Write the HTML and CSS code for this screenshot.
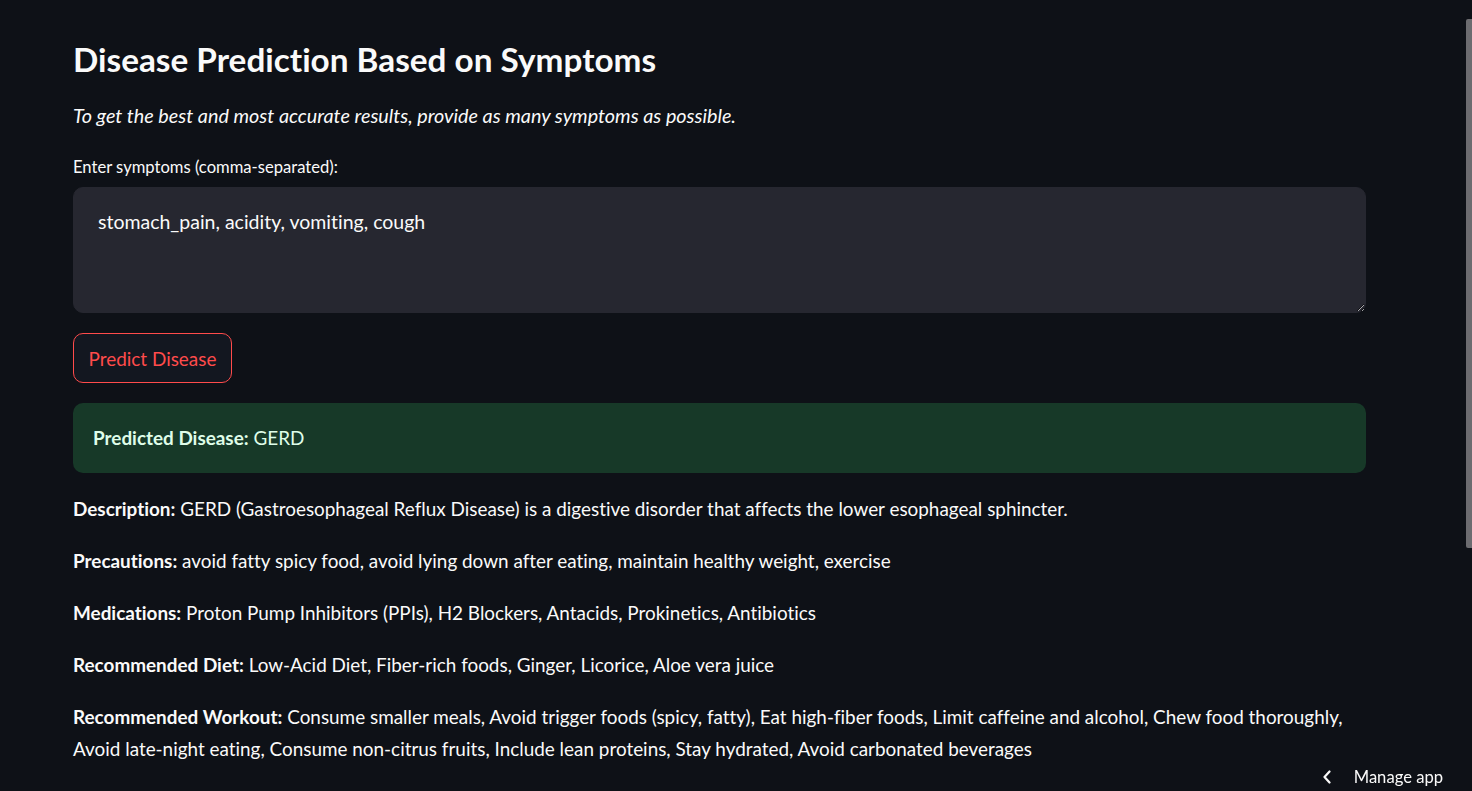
FILE: index.html
```html
<!DOCTYPE html>
<html lang="en">
<head>
<meta charset="utf-8">
<title>Disease Prediction</title>
<link rel="stylesheet" href="styles.css">
</head>
<body>
<main class="main">
  <h1 class="title">Disease Prediction Based on Symptoms</h1>
  <p class="intro"><em>To get the best and most accurate results, provide as many symptoms as possible.</em></p>
  <label class="field-label" for="symptoms">Enter symptoms (comma-separated):</label>
  <textarea class="field" id="symptoms">stomach_pain, acidity, vomiting, cough</textarea>
  <div class="btn-row"><button class="btn">Predict Disease</button></div>
  <div class="alert-success"><strong>Predicted Disease:</strong> GERD</div>
  <div class="results">
    <p><strong>Description:</strong> GERD (Gastroesophageal Reflux Disease) is a digestive disorder that affects the lower esophageal sphincter.</p>
    <p><strong>Precautions:</strong> avoid fatty spicy food, avoid lying down after eating, maintain healthy weight, exercise</p>
    <p><strong>Medications:</strong> Proton Pump Inhibitors (PPIs), H2 Blockers, Antacids, Prokinetics, Antibiotics</p>
    <p><strong>Recommended Diet:</strong> Low-Acid Diet, Fiber-rich foods, Ginger, Licorice, Aloe vera juice</p>
    <p><strong>Recommended Workout:</strong> Consume smaller meals, Avoid trigger foods (spicy, fatty), Eat high-fiber foods, Limit caffeine and alcohol, Chew food thoroughly, Avoid late-night eating, Consume non-citrus fruits, Include lean proteins, Stay hydrated, Avoid carbonated beverages</p>
  </div>
</main>
<div class="scroll-thumb"></div>
<div class="manage">
  <svg class="chev" width="10" height="14" viewBox="0 0 10 14"><path d="M7.5 1.5 L2.5 7 L7.5 12.5" fill="none" stroke="#fafafa" stroke-width="2.2" stroke-linecap="round" stroke-linejoin="round"/></svg>
  <span>Manage app</span>
</div>
</body>
</html>
```
FILE: styles.css
```css
html,body{margin:0;padding:0;}
body{
  background:#0e1117;
  color:#fafafa;
  font-family:Lato,"Noto Sans",sans-serif;
  font-variant-ligatures:none;
  font-size:18.9px;
  overflow:hidden;
}
.main{
  width:1293px;
  margin-left:73px;
  padding-top:39px;
  display:flex;
  flex-direction:column;
}
.title{
  margin:0;
  font-size:33.3px;
  line-height:40px;
  font-weight:700;
}
.intro{
  margin:20px 0 0;
  font-size:19.8px;
  line-height:32px;
}
.field-label{
  margin-top:26px;
  font-size:16.6px;
  line-height:20px;
}
.field{
  margin-top:10px;
  box-sizing:border-box;
  width:100%;
  height:126px;
  background:#262730;
  color:#fafafa;
  border:1px solid #262730;
  border-radius:10px;
  padding:18px 24px;
  font-family:Lato,"Noto Sans",sans-serif;
  font-variant-ligatures:none;
  font-size:19.5px;
  line-height:32px;
  resize:vertical;
  outline:none;
}
.btn-row{margin-top:20px;display:flex;}
.btn{
  box-sizing:border-box;
  height:50px;
  width:159px;
  white-space:nowrap;
  background:#131720;
  color:#ff4b4b;
  border:1px solid #ff4b4b;
  border-radius:10px;
  font-family:Lato,"Noto Sans",sans-serif;
  font-variant-ligatures:none;
  font-size:18.9px;
  padding:0;
}
.alert-success{
  margin-top:20px;
  box-sizing:border-box;
  height:70px;
  background:#173928;
  color:#dffde9;
  border-radius:10px;
  padding:19px 20px;
  line-height:32px;
}
.results{margin-top:20px;}
.results p{margin:0 0 20px;line-height:32px;}
.scroll-thumb{
  position:fixed;
  right:0;
  top:19px;
  width:6px;
  height:529px;
  background:#6c6c70;
  border-radius:2px 0 0 2px;
}
.manage{
  position:fixed;
  right:29px;
  bottom:0;
  height:28px;
  display:flex;
  align-items:center;
  gap:22px;
  font-size:16.6px;
  color:#fafafa;
}
.chev{display:block;}
```
